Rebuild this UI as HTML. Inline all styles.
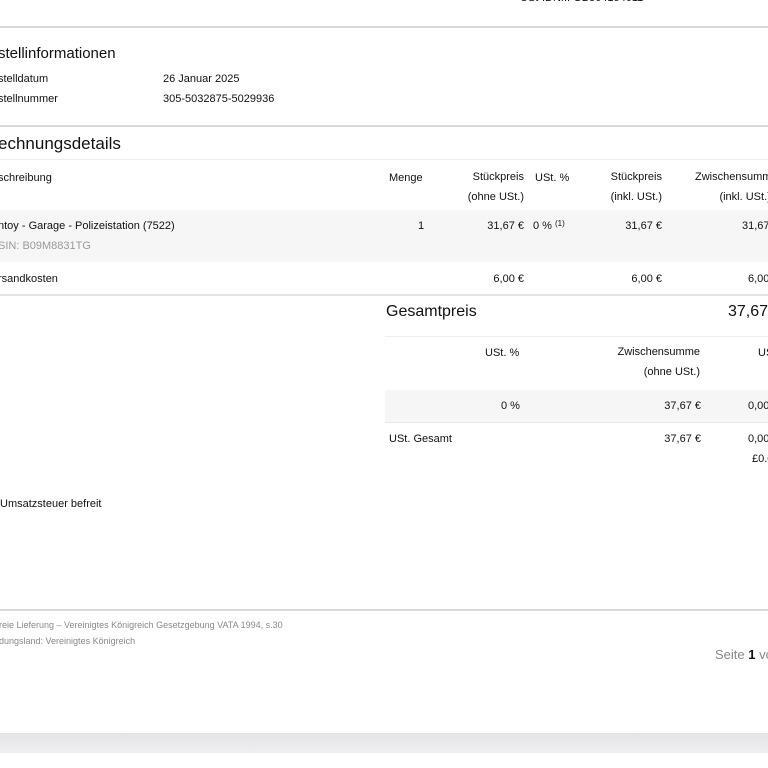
<html><head><style>
body{margin:0;width:768px;height:768px;background:#fff;font-family:"Liberation Sans",sans-serif;color:#111;position:relative;overflow:hidden}
div{position:absolute;white-space:nowrap}
.s{font-size:11px}
.r{text-align:right}
.hl{height:1px;background:#ddd}
.t{line-height:20px}
</style></head><body>
<div class="s" style="left:520px;top:-8px">USt-IDNr.: GB864154611</div>
<div class="hl" style="left:0;top:26px;width:768px;height:2px;background:#d8d8d8"></div>
<div style="left:-2px;top:45px;font-size:15px">stellinformationen</div>
<div class="s" style="left:-2px;top:73px">stelldatum</div>
<div class="s" style="left:163px;top:73px">26 Januar 2025</div>
<div class="s" style="left:-2px;top:93px">stellnummer</div>
<div class="s" style="left:163px;top:93px">305-5032875-5029936</div>
<div class="hl" style="left:0;top:125px;width:768px;height:2px;background:#d8d8d8"></div>
<div style="left:-2px;top:134px;font-size:17px">echnungsdetails</div>
<div class="hl" style="left:0;top:159px;width:768px;background:#eee"></div>
<div class="s" style="left:-2px;top:172px">schreibung</div>
<div class="s" style="left:389px;top:172px">Menge</div>
<div class="s r t" style="left:440px;top:167px;width:84px">Stückpreis<br>(ohne USt.)</div>
<div class="s" style="left:535px;top:172px">USt. %</div>
<div class="s r t" style="left:580px;top:167px;width:82px">Stückpreis<br>(inkl. USt.)</div>
<div class="s t" style="left:695px;top:167px">Zwischensumme<br>&nbsp;&nbsp;&nbsp;&nbsp;&nbsp;&nbsp;&nbsp;&nbsp;(inkl. USt.)</div>
<div style="left:0;top:210px;width:768px;height:52px;background:#f6f6f6"></div>
<div class="s" style="left:-2px;top:220px">ntoy - Garage - Polizeistation (7522)</div>
<div class="s" style="left:-2px;top:240px;color:#999">SIN: B09M8831TG</div>
<div class="s" style="left:418px;top:220px">1</div>
<div class="s r" style="left:440px;top:220px;width:84px">31,67 €</div>
<div class="s" style="left:533px;top:220px">0 % <span style="font-size:8px;position:relative;top:-3px">(1)</span></div>
<div class="s r" style="left:580px;top:220px;width:82px">31,67 €</div>
<div class="s" style="left:742px;top:220px">31,67 €</div>
<div class="s" style="left:-2px;top:273px">rsandkosten</div>
<div class="s r" style="left:440px;top:273px;width:84px">6,00 €</div>
<div class="s r" style="left:580px;top:273px;width:82px">6,00 €</div>
<div class="s" style="left:748px;top:273px">6,00 €</div>
<div class="hl" style="left:0;top:294px;width:768px;height:2px;background:#e4e4e4"></div>
<div style="left:386px;top:303px;font-size:16px">Gesamtpreis</div>
<div style="left:728px;top:303px;font-size:16px">37,67 €</div>
<div class="hl" style="left:385px;top:336px;width:383px;background:#eee"></div>
<div class="s" style="left:485px;top:347px">USt. %</div>
<div class="s r t" style="left:600px;top:342px;width:100px">Zwischensumme<br>(ohne USt.)</div>
<div class="s" style="left:758px;top:347px">USt.</div>
<div style="left:385px;top:390px;width:383px;height:32px;background:#f6f6f6"></div>
<div class="s" style="left:501px;top:400px">0 %</div>
<div class="s r" style="left:600px;top:400px;width:101px">37,67 €</div>
<div class="s" style="left:748px;top:400px">0,00 €</div>
<div class="hl" style="left:385px;top:422px;width:383px;background:#e8e8e8"></div>
<div class="s" style="left:389px;top:433px">USt. Gesamt</div>
<div class="s r" style="left:600px;top:433px;width:101px">37,67 €</div>
<div class="s" style="left:748px;top:433px">0,00 €</div>
<div class="s" style="left:752px;top:453px">£0.00</div>
<div class="s" style="left:0;top:498px">Umsatzsteuer befreit</div>
<div class="hl" style="left:0;top:609px;width:768px;height:2px;background:#d8d8d8"></div>
<div style="left:-1px;top:620px;font-size:9px;color:#888">reie Lieferung – Vereinigtes Königreich Gesetzgebung VATA 1994, s.30</div>
<div style="left:-1px;top:636px;font-size:9px;color:#888">dungsland: Vereinigtes Königreich</div>
<div style="left:715px;top:647px;font-size:13px;color:#888">Seite <b style="color:#111">1</b> von 1</div>
<div style="left:0;top:733px;width:768px;height:20px;background:linear-gradient(#e4e4e7,#efeff2)"></div>
</body></html>
